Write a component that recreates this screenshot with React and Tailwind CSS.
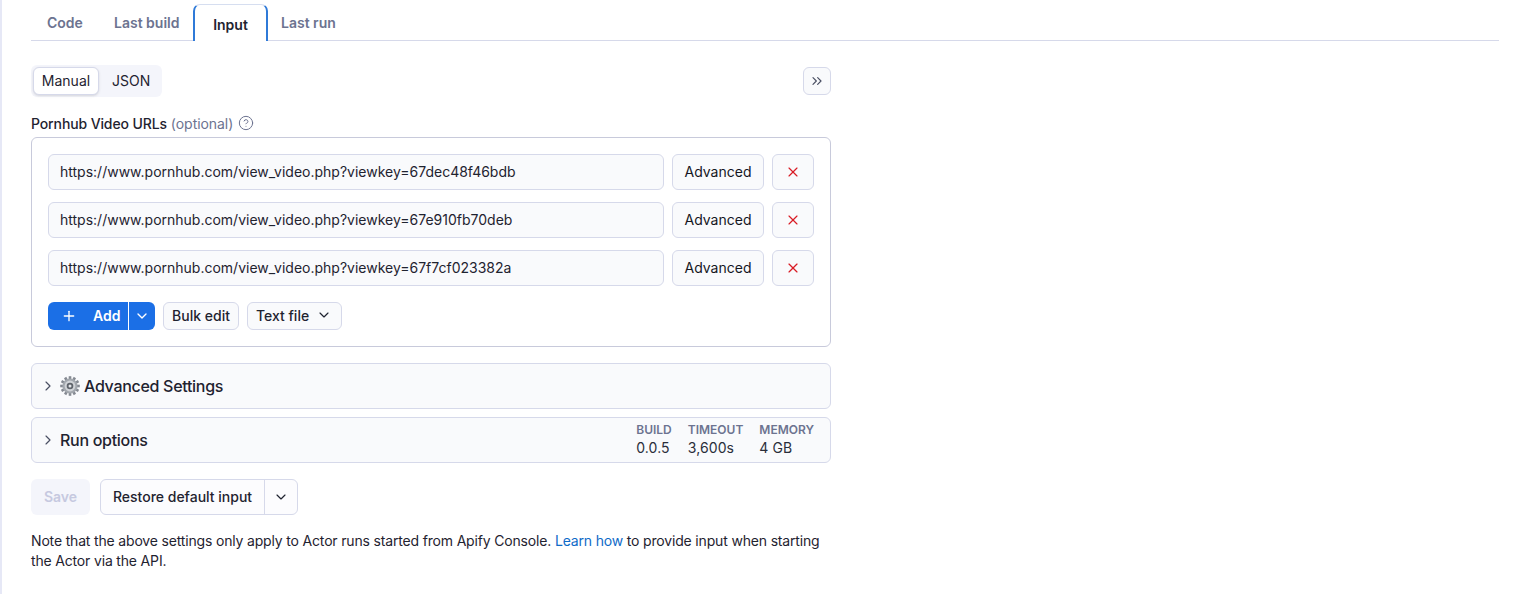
import React from "react";
import { ChevronDown, ChevronRight, ChevronsRight, Plus, X, CircleHelp } from "lucide-react";

const urls = [
  "https://www.pornhub.com/view_video.php?viewkey=67dec48f46bdb",
  "https://www.pornhub.com/view_video.php?viewkey=67e910fb70deb",
  "https://www.pornhub.com/view_video.php?viewkey=67f7cf023382a",
];

function Gear() {
  const teeth = Array.from({ length: 12 }, (_, i) => i * 30);
  return (
    <svg width="20" height="20" viewBox="0 0 20 20" className="shrink-0 block">
      {teeth.map((a) => (
        <rect key={a} x="8.7" y="0.2" width="2.6" height="4" fill="#858a92" transform={`rotate(${a} 10 10)`} />
      ))}
      <circle cx="10" cy="10" r="7.6" fill="#a3a8ae" />
      <circle cx="10" cy="10" r="5.4" fill="#d0d3d7" />
      <circle cx="10" cy="10" r="3.3" fill="#5f646b" />
      <circle cx="10" cy="10" r="1.5" fill="#e3e5e8" />
    </svg>
  );
}

function Stat({ label, value }) {
  return (
    <div className="flex flex-col">
      <span className="text-[12px] leading-[16px] font-semibold text-[#6c7390]">{label}</span>
      <span className="text-[14px] leading-[20px] tracking-[0.1px] text-[#2a2e3a]">{value}</span>
    </div>
  );
}

export default function App() {
  return (
    <div
      className="w-[1522px] h-[594px] overflow-hidden bg-white border-l-2 border-[#e6e8f6] pl-[29px] pr-[23px] text-[#1f2330]"
      style={{ fontFamily: "Inter, 'Liberation Sans', sans-serif" }}
    >
      <div className="flex h-[41px] pt-[4px] border-b border-[#d6d9ea] text-[14px] font-semibold text-[#6c7390]">
        <div className="w-[83px] pl-[16px] pt-[10px] leading-[17px]">Code</div>
        <div className="w-[79px] pt-[10px] leading-[17px]">Last build</div>
        <div className="w-[75px] h-[37px] border-x-2 border-t border-x-[#2f7ad8] border-t-[#d6def0] rounded-t-[7px] bg-white text-center pt-[11px] leading-[17px] text-[#1f2330] relative z-10">
          Input
        </div>
        <div className="pl-[13px] pt-[10px] leading-[17px]">Last run</div>
      </div>

      <div className="w-[800px]">
        <div className="flex items-center justify-between mt-[24px] h-[32px]">
          <div className="flex h-[32px] w-[131px] rounded-[6px] bg-[#f4f5fb] p-[2px] text-[14px] items-center">
            <div className="w-[66px] h-[28px] pb-[1px] rounded-[6px] border border-[#d6d9ea] bg-white shadow-sm flex items-center justify-center">
              Manual
            </div>
            <div className="ml-[13px] pb-[1px]">JSON</div>
          </div>
          <div className="w-[28px] h-[28px] rounded-[6px] border border-[#d6d9ea] bg-[#f9fafc] flex items-center justify-center text-[#4a4f63]">
            <ChevronsRight size={16} strokeWidth={1.75} />
          </div>
        </div>

        <div className="flex items-center mt-[16px] h-[20px] text-[14px] font-medium">
          <span className="tracking-[-0.12px]">Pornhub Video URLs</span>
          <span className="ml-[4px] font-normal text-[#6c7390] tracking-[-0.05px]">(optional)</span>
          <CircleHelp size={16} strokeWidth={1.5} className="ml-[5px] text-[#6c7390]" />
        </div>

        <div className="mt-[4px] h-[210px] rounded-[6px] border border-[#c8cadb] p-[16px]">
          <div className="flex flex-col gap-[12px]">
            {urls.map((u) => (
              <div key={u} className="flex gap-[8px] h-[36px] text-[14px]">
                <div className="w-[616px] pb-[2px] rounded-[6px] border border-[#d6d9ea] bg-[#f9fafc] pl-[11px] flex items-center">
                  {u}
                </div>
                <div className="w-[92px] pb-[2px] rounded-[6px] border border-[#d6d9ea] bg-[#f9fafc] flex items-center justify-center text-[#15171f]">
                  Advanced
                </div>
                <div className="w-[42px] rounded-[6px] border border-[#d6d9ea] bg-[#f9fafc] flex items-center justify-center text-[#d91c25]">
                  <X size={16} strokeWidth={1.75} />
                </div>
              </div>
            ))}
          </div>
          <div className="flex gap-[8px] mt-[16px] h-[28px] text-[14px] font-medium">
            <div className="flex w-[107px] rounded-[6px] overflow-hidden bg-[#1b6fe6] text-white font-semibold">
              <div className="w-[80px] flex items-center pl-[13px] gap-[16px] pb-[1px]">
                <Plus size={16} strokeWidth={2} />
                <span>Add</span>
              </div>
              <div className="w-px bg-white" />
              <div className="flex-1 flex items-center justify-center">
                <ChevronDown size={16} strokeWidth={2} />
              </div>
            </div>
            <div className="w-[76px] pb-[2px] rounded-[6px] border border-[#d6d9ea] bg-[#f9fafc] flex items-center justify-center">
              Bulk edit
            </div>
            <div className="w-[95px] pb-[2px] rounded-[6px] border border-[#d6d9ea] bg-[#f9fafc] flex items-center pl-[8px] gap-[7px]">
              Text file
              <ChevronDown size={16} strokeWidth={1.75} />
            </div>
          </div>
        </div>

        <div className="mt-[16px] h-[46px] rounded-[6px] border border-[#d6d9ea] bg-[#f9fafc] flex items-center pl-[8px] text-[16px] font-medium">
          <ChevronRight size={16} strokeWidth={1.75} className="text-[#4a4f63]" />
          <span className="ml-[4px]"><Gear /></span>
          <span className="ml-[4px] tracking-[-0.3px]">Advanced Settings</span>
        </div>

        <div className="mt-[8px] h-[46px] rounded-[6px] border border-[#d6d9ea] bg-[#f9fafc] flex items-center pl-[8px] pr-[16px] text-[16px] font-medium">
          <ChevronRight size={16} strokeWidth={1.75} className="text-[#4a4f63]" />
          <span className="ml-[4px] tracking-[-0.3px]">Run options</span>
          <div className="ml-auto flex gap-[16px] font-normal">
            <Stat label="BUILD" value="0.0.5" />
            <Stat label="TIMEOUT" value="3,600s" />
            <Stat label="MEMORY" value="4 GB" />
          </div>
        </div>

        <div className="flex mt-[16px] h-[36px] gap-[10px] text-[14px] font-medium">
          <div className="w-[59px] pb-[1px] rounded-[6px] bg-[#f4f5fb] text-[#c6c9e0] font-semibold flex items-center justify-center">
            Save
          </div>
          <div className="w-[198px] rounded-[6px] border border-[#d6d9ea] bg-[#fcfcfe] flex">
            <div className="w-[164px] pb-[2px] border-r border-[#d6d9ea] flex items-center justify-center">
              Restore default input
            </div>
            <div className="flex-1 flex items-center justify-center">
              <ChevronDown size={16} strokeWidth={1.75} />
            </div>
          </div>
        </div>

        <p className="mt-[16px] text-[14px] leading-[20px] tracking-[-0.17px]">
          Note that the above settings only apply to Actor runs started from Apify Console.{" "}
          <span className="text-[#0f6bc8]">Learn how</span> to provide input when starting the Actor via the API.
        </p>
      </div>
    </div>
  );
}
